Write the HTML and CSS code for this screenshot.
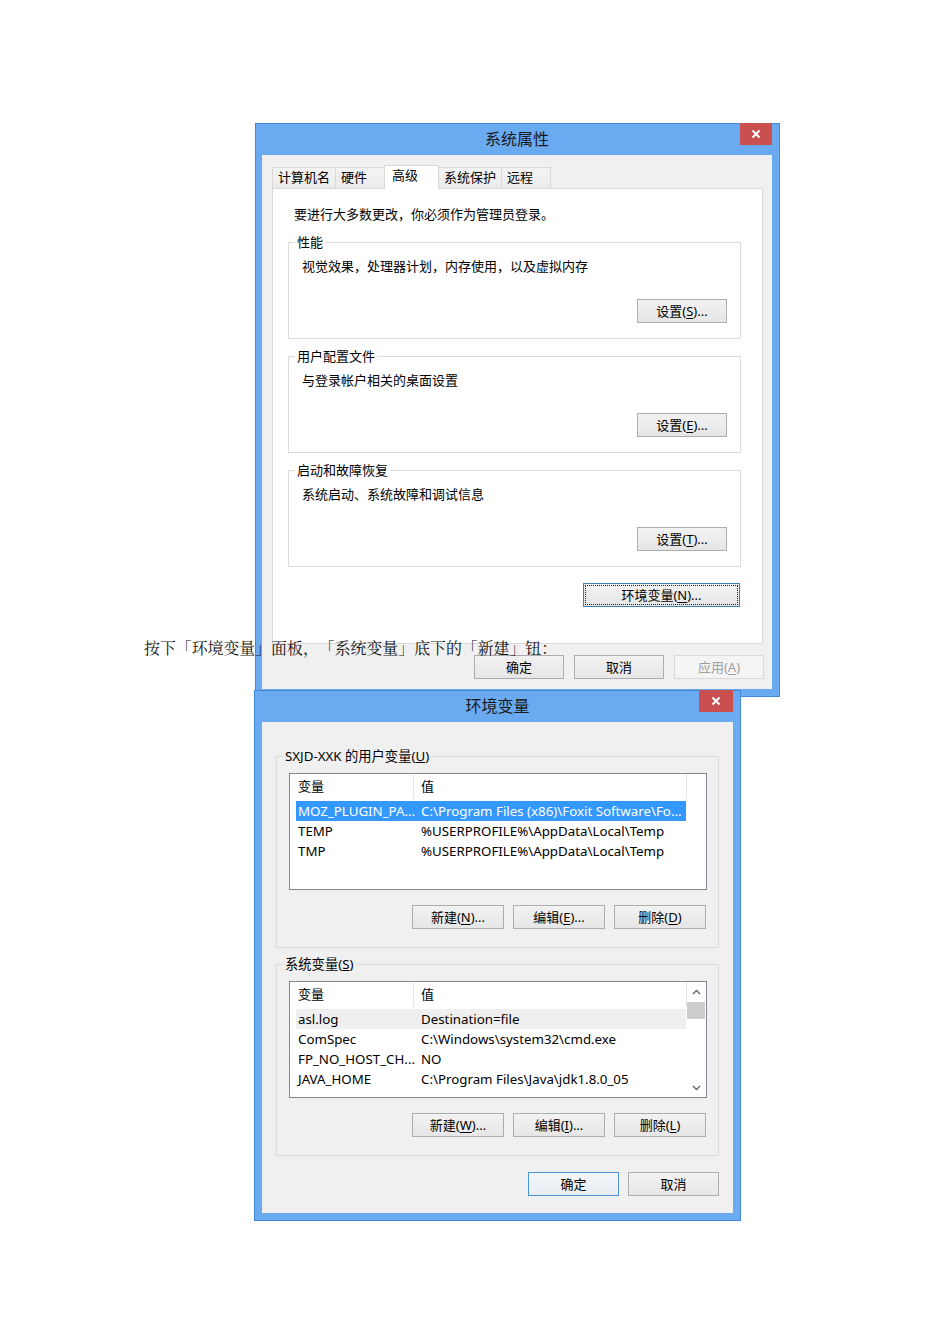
FILE: index.html
```html
<!DOCTYPE html>
<html lang="zh-CN">
<head>
<meta charset="utf-8">
<title>环境变量设置</title>
<link rel="stylesheet" href="styles.css">
</head>
<body>
<div class="page">

  <!-- 系统属性 dialog -->
  <div class="win win-sys">
    <div class="titlebar">
      <span class="title">系统属性</span>
      <span class="close"><svg width="10" height="10" viewBox="0 0 10 10"><path d="M1.5 1.5 L8.5 8.5 M8.5 1.5 L1.5 8.5" stroke="#fff" stroke-width="2" fill="none"/></svg></span>
    </div>
    <div class="client">
      <div class="tabs">
        <span class="tab">计算机名</span>
        <span class="tab">硬件</span>
        <span class="tab active">高级</span>
        <span class="tab">系统保护</span>
        <span class="tab">远程</span>
      </div>
      <div class="tab-panel">
        <p class="note">要进行大多数更改，你必须作为管理员登录。</p>

        <fieldset class="group">
          <legend>性能</legend>
          <p class="desc">视觉效果，处理器计划，内存使用，以及虚拟内存</p>
          <div class="row-end"><button class="btn btn-set">设置(<u>S</u>)...</button></div>
        </fieldset>

        <fieldset class="group">
          <legend>用户配置文件</legend>
          <p class="desc">与登录帐户相关的桌面设置</p>
          <div class="row-end"><button class="btn btn-set">设置(<u>E</u>)...</button></div>
        </fieldset>

        <fieldset class="group">
          <legend>启动和故障恢复</legend>
          <p class="desc">系统启动、系统故障和调试信息</p>
          <div class="row-end"><button class="btn btn-set">设置(<u>T</u>)...</button></div>
        </fieldset>

        <div class="row-end env-row"><button class="btn btn-env">环境变量(<u>N</u>)...</button></div>
      </div>
      <div class="dialog-actions sys-actions">
        <button class="btn">确定</button>
        <button class="btn">取消</button>
        <button class="btn" disabled>应用(<u>A</u>)</button>
      </div>
    </div>
  </div>

  <p class="caption">按下「环境变量」面板，「系统变量」底下的「新建」钮：</p>

  <!-- 环境变量 dialog -->
  <div class="win win-env">
    <div class="titlebar">
      <span class="title">环境变量</span>
      <span class="close"><svg width="10" height="10" viewBox="0 0 10 10"><path d="M1.5 1.5 L8.5 8.5 M8.5 1.5 L1.5 8.5" stroke="#fff" stroke-width="2" fill="none"/></svg></span>
    </div>
    <div class="client env-client">

      <fieldset class="group env-group">
        <legend>SXJD-XXK 的用户变量(<u>U</u>)</legend>
        <div class="list">
          <div class="list-main">
            <div class="list-head">
              <span class="hcell hcell-name">变量</span>
              <span class="hcell hcell-value">值</span>
            </div>
            <div class="rows">
              <div class="row selected"><span class="cell-name">MOZ_PLUGIN_PA...</span><span class="cell-value">C:\Program Files (x86)\Foxit Software\Fo...</span></div>
              <div class="row"><span class="cell-name">TEMP</span><span class="cell-value">%USERPROFILE%\AppData\Local\Temp</span></div>
              <div class="row"><span class="cell-name">TMP</span><span class="cell-value">%USERPROFILE%\AppData\Local\Temp</span></div>
            </div>
          </div>
          <div class="list-side"></div>
        </div>
        <div class="row-end btn-row">
          <button class="btn btn-list">新建(<u>N</u>)...</button>
          <button class="btn btn-list">编辑(<u>E</u>)...</button>
          <button class="btn btn-list">删除(<u>D</u>)</button>
        </div>
      </fieldset>

      <fieldset class="group env-group">
        <legend>系统变量(<u>S</u>)</legend>
        <div class="list">
          <div class="list-main">
            <div class="list-head">
              <span class="hcell hcell-name">变量</span>
              <span class="hcell hcell-value">值</span>
            </div>
            <div class="rows">
              <div class="row hover"><span class="cell-name">asl.log</span><span class="cell-value">Destination=file</span></div>
              <div class="row"><span class="cell-name">ComSpec</span><span class="cell-value">C:\Windows\system32\cmd.exe</span></div>
              <div class="row"><span class="cell-name">FP_NO_HOST_CH...</span><span class="cell-value">NO</span></div>
              <div class="row"><span class="cell-name">JAVA_HOME</span><span class="cell-value">C:\Program Files\Java\jdk1.8.0_05</span></div>
            </div>
          </div>
          <div class="list-side scrollbar">
            <span class="sb-arrow"><svg width="9" height="6" viewBox="0 0 9 6"><path d="M1 5 L4.5 1.5 L8 5" stroke="#606060" stroke-width="1.3" fill="none"/></svg></span>
            <span class="sb-thumb"></span>
            <span class="sb-track"></span>
            <span class="sb-arrow"><svg width="9" height="6" viewBox="0 0 9 6"><path d="M1 1 L4.5 4.5 L8 1" stroke="#606060" stroke-width="1.3" fill="none"/></svg></span>
          </div>
        </div>
        <div class="row-end btn-row">
          <button class="btn btn-list">新建(<u>W</u>)...</button>
          <button class="btn btn-list">编辑(<u>I</u>)...</button>
          <button class="btn btn-list">删除(<u>L</u>)</button>
        </div>
      </fieldset>

      <div class="dialog-actions env-actions">
        <button class="btn btn-default">确定</button>
        <button class="btn">取消</button>
      </div>
    </div>
  </div>

</div>
</body>
</html>
```

FILE: styles.css
```css
* {
  box-sizing: border-box;
}

html,
body {
  margin: 0;
  background: #ffffff;
}

body {
  width: 950px;
  height: 1344px;
  overflow: hidden;
  font-family: "Noto Sans", "Noto Sans CJK SC", sans-serif;
  font-size: 13px;
  color: #000000;
}

p {
  margin: 0;
}

.page {
  padding-top: 123px;
}

/* ---------- window frame ---------- */

.win {
  position: relative;
  background: #6aaaf0;
  border: 1px solid #4487d6;
}

.win-sys {
  z-index: 1;
  margin-left: 255px;
  width: 525px;
  height: 574px;
  padding: 0 7px 7px 6px;
}

.win-env {
  z-index: 3;
  margin-top: 34px;
  margin-left: 254px;
  width: 487px;
  height: 531px;
  padding: 0 7px 7px 7px;
}

.titlebar {
  height: 31px;
  display: grid;
  grid-template-columns: 1fr auto 1fr;
  align-items: center;
}

.title {
  grid-column: 2;
  padding-bottom: 3px;
  font-family: "Noto Sans CJK SC", sans-serif;
  font-size: 16px;
  line-height: 20px;
  color: #1a1a1a;
}

.close {
  grid-column: 3;
  justify-self: end;
  align-self: start;
  margin-top: -1px;
  width: 32px;
  height: 22px;
  background: #c9504f;
  display: flex;
  align-items: center;
  justify-content: center;
}

.win-env .close {
  width: 34px;
}

.client {
  background: #f0f0f0;
  height: 534px;
  padding: 10px 8px 0 10px;
}

/* ---------- tabs ---------- */

.tabs {
  display: flex;
  align-items: flex-end;
  height: 23px;
  position: relative;
  z-index: 2;
}

.tab {
  height: 21px;
  min-width: 50px;
  padding: 0 5px;
  margin-left: -1px;
  border: 1px solid #d9d9d9;
  border-bottom: none;
  background: linear-gradient(#f3f3f3, #ebebeb);
  line-height: 19px;
  font-size: 13px;
  white-space: nowrap;
}

.tab:first-child {
  margin-left: 0;
}

.tab.active {
  height: 24px;
  min-width: 55px;
  margin-bottom: -1px;
  padding: 0 7px;
  background: #ffffff;
  line-height: 19px;
  position: relative;
  z-index: 3;
}

.tab-panel {
  background: #ffffff;
  border: 1px solid #d9d9d9;
  height: 456px;
  margin-right: 1px;
  padding: 17px 21px 0 15px;
}

.note {
  line-height: 16px;
  padding-left: 6px;
}

/* ---------- group boxes ---------- */

.group {
  margin: 9px 0 0;
  padding: 0 13px 15px 6px;
  border: 1px solid #dcdcdc;
  min-width: 0;
}

.note + .group {
  margin-top: 12px;
}

.group legend {
  padding: 0 2px;
  line-height: 16px;
  font-size: 13px;
}

.desc {
  margin-top: 8px;
  padding-left: 7px;
  line-height: 16px;
}

.row-end {
  display: flex;
  justify-content: flex-end;
}

.group .row-end {
  margin-top: 25px;
}

.env-row {
  margin-top: 16px;
  margin-right: 1px;
}

/* ---------- buttons ---------- */

.btn {
  height: 24px;
  padding: 0;
  border: 1px solid #adadad;
  background: linear-gradient(#f2f2f2, #e6e6e6);
  font-family: "Noto Sans", "Noto Sans CJK SC", sans-serif;
  font-size: 13px;
  line-height: 20px;
  color: #000000;
}

.btn u {
  text-underline-offset: 2px;
}

.btn-set {
  width: 90px;
}

.btn-env {
  width: 157px;
  border-color: #3c7fb1;
  outline: 1px dotted #222;
  outline-offset: -3px;
}

.btn:disabled {
  border-color: #d9d9d9;
  background: #f4f4f4;
  color: #a0a0a0;
}

.btn-default {
  border-color: #4b93da;
  background: linear-gradient(#f3f6fa, #e9edf2);
}

.dialog-actions {
  display: flex;
  justify-content: flex-end;
  gap: 10px;
}

.sys-actions {
  margin-top: 11px;
}

.sys-actions .btn {
  width: 90px;
}

/* ---------- caption between the dialogs ---------- */

.caption {
  position: relative;
  z-index: 2;
  margin-top: -57px;
  padding-left: 144px;
  font-family: "Noto Serif CJK SC", "Noto Sans CJK SC", serif;
  font-size: 15.9px;
  line-height: 16px;
  color: #111;
  text-spacing-trim: space-all;
  white-space: nowrap;
}

/* ---------- environment dialog ---------- */

.env-client {
  height: 491px;
  padding: 26px 14px 0 14px;
}

.env-group {
  margin: 8px 0 0;
  padding: 0 11px 18px 6px;
}

.env-group:first-child {
  margin-top: 0;
}

.env-group legend {
  font-size: 13.3px;
}

.list {
  margin-top: 9px;
  margin-left: 6px;
  height: 117px;
  border: 1px solid #828790;
  background: #ffffff;
  display: flex;
}

.list-main {
  width: 397px;
}

.list-head {
  display: flex;
  height: 25px;
}

.hcell {
  line-height: 25px;
  border-right: 1px solid #e5e5e5;
}

.hcell-name {
  width: 124px;
  padding-left: 8px;
}

.hcell-value {
  width: 273px;
  padding-left: 7px;
}

.rows {
  padding-top: 2px;
  margin-left: 6px;
  width: 390px;
}

.row {
  display: flex;
  height: 20px;
  line-height: 20px;
  font-size: 13.3px;
  white-space: nowrap;
  color: #000;
}

.row.selected {
  background: #3399ff;
  color: #ffffff;
}

.row.hover {
  background: #efefef;
}

.cell-name {
  width: 123px;
  padding-left: 2px;
  overflow: hidden;
}

.cell-value {
  padding-left: 2px;
}

.list-side {
  flex: 1;
}

.scrollbar {
  display: flex;
  flex-direction: column;
  align-items: center;
  padding-right: 1px;
}

.sb-arrow {
  height: 19px;
  width: 100%;
  display: flex;
  align-items: center;
  justify-content: center;
}

.sb-thumb {
  width: 100%;
  height: 17px;
  margin-top: 1px;
  background: #cdcdcd;
}

.sb-track {
  flex: 1;
}

.env-group .btn-row {
  margin-top: 15px;
  margin-right: 1px;
  gap: 9px;
}

.btn-list {
  width: 92px;
}

.env-actions {
  margin-top: 16px;
  gap: 9px;
}

.env-actions .btn {
  width: 91px;
}
```
